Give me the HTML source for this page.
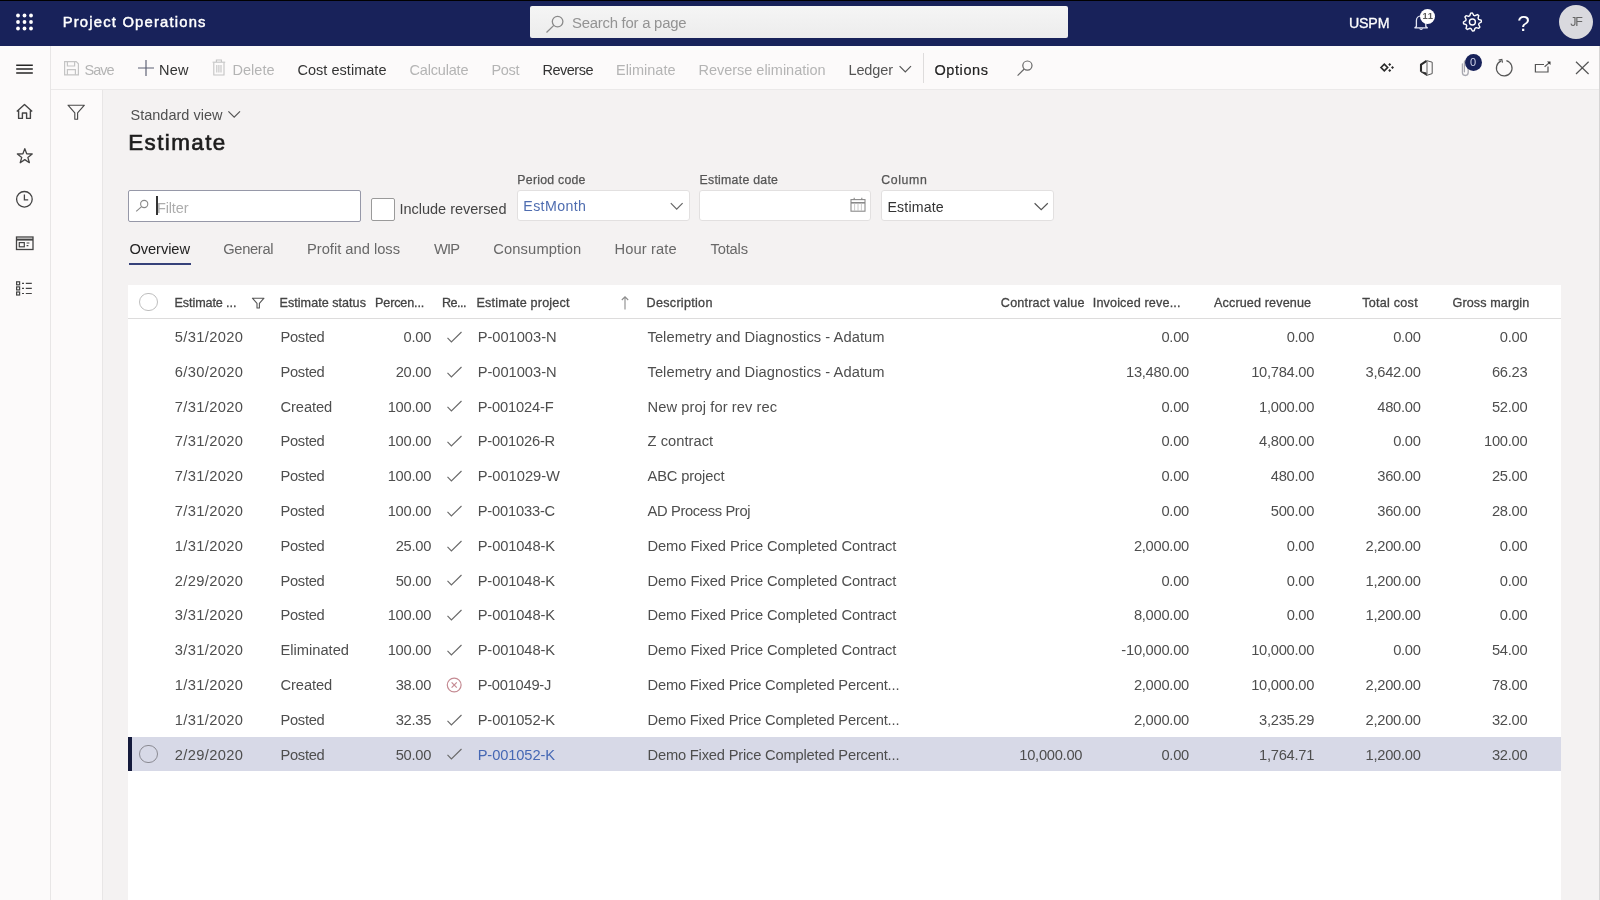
<!DOCTYPE html>
<html lang="en"><head><meta charset="utf-8"><title>Estimate - Project Operations</title>
<style>
html,body{margin:0;padding:0;}
body{width:1600px;height:900px;overflow:hidden;background:#f4f2f2;font-family:"Liberation Sans", sans-serif;position:relative;}
#app{position:absolute;left:0;top:0;width:1600px;height:900px;overflow:hidden;will-change:transform;}
.b{position:absolute;display:block;}
.t{position:absolute;white-space:pre;}
</style></head>
<body>
<div id="app">
<div class="b" style="left:0px;top:0px;width:1600px;height:46px;background:#18225a;"></div>
<div class="b" style="left:0px;top:0px;width:1600px;height:1px;background:#000;"></div>
<div class="b" style="left:0px;top:46px;width:1600px;height:44px;background:#fcfafa;"></div>
<div class="b" style="left:51px;top:89px;width:1549px;height:1px;background:#ebe9e9;"></div>
<div class="b" style="left:0px;top:46px;width:50px;height:854px;background:#fcfafa;"></div>
<div class="b" style="left:50px;top:46px;width:1px;height:854px;background:#e8e6e6;"></div>
<div class="b" style="left:51px;top:90px;width:51px;height:810px;background:#fcfafa;"></div>
<div class="b" style="left:102px;top:90px;width:1px;height:810px;background:#e8e6e6;"></div>
<div class="b" style="left:1599px;top:46px;width:1px;height:854px;background:#d6d5d5;"></div>
<svg class="b" style="left:0px;top:0px;" width="50" height="46" viewBox="0 0 50 46" fill="none"><g fill="#fff"><circle cx="18" cy="15.5" r="1.9"/><circle cx="24.5" cy="15.5" r="1.9"/><circle cx="31" cy="15.5" r="1.9"/><circle cx="18" cy="22" r="1.9"/><circle cx="24.5" cy="22" r="1.9"/><circle cx="31" cy="22" r="1.9"/><circle cx="18" cy="28.5" r="1.9"/><circle cx="24.5" cy="28.5" r="1.9"/><circle cx="31" cy="28.5" r="1.9"/></g></svg>
<div class="t" style="top:13.00px;font-size:14.8px;line-height:18px;color:#fff;letter-spacing:1.193px;-webkit-text-stroke:0.45px #fff;left:62.68px;">Project Operations</div>
<div class="b" style="left:530px;top:6px;width:538px;height:31.6px;background:linear-gradient(#f5f5f5,#ececec);border-radius:2px;"></div>
<svg class="b" style="left:540px;top:10px;" width="30" height="26" viewBox="0 0 30 26" fill="none"><circle cx="17.6" cy="11.6" r="5.3" stroke="#8a8a8a" stroke-width="1.3"/><path d="M13.8 15.4 L6.5 22.5" stroke="#8a8a8a" stroke-width="1.3"/></svg>
<div class="t" style="top:14.00px;font-size:14.9px;line-height:18px;color:#939393;letter-spacing:-0.240px;left:571.98px;">Search for a page</div>
<div class="t" style="top:15.00px;font-size:14.2px;line-height:17px;color:#fff;letter-spacing:-0.169px;-webkit-text-stroke:0.3px #fff;left:1349.00px;">USPM</div>
<svg class="b" style="left:1408px;top:10px;" width="30" height="26" viewBox="0 0 30 26" fill="none"><path d="M8.4 16.4 V10.6 a4.7 4.7 0 0 1 9.4 0 V16.4 l1.5 1.4 H6.9 Z" stroke="#e4e6f4" stroke-width="1.3" stroke-linejoin="round"/><path d="M11.6 18.4 a1.6 1.6 0 0 0 3 0" stroke="#e4e6f4" stroke-width="1.2"/></svg>
<div class="b" style="left:1420px;top:8.5px;width:15px;height:15.0px;background:#fff;border-radius:50%;"></div>
<div class="t" style="top:10.00px;font-size:9.4px;line-height:11px;color:#5a5a5a;font-weight:700;letter-spacing:0.536px;left:1422.47px;">11</div>
<svg class="b" style="left:1458px;top:8px;" width="30" height="30" viewBox="0 0 30 30" fill="none"><path d="M23.23 12.24 L23.40 14.00 L21.07 15.33 L20.68 16.60 L21.88 19.00 L20.76 20.36 L18.18 19.65 L17.00 20.28 L16.16 22.83 L14.40 23.00 L13.07 20.67 L11.80 20.28 L9.40 21.48 L8.04 20.36 L8.75 17.78 L8.12 16.60 L5.57 15.76 L5.40 14.00 L7.73 12.67 L8.12 11.40 L6.92 9.00 L8.04 7.64 L10.62 8.35 L11.80 7.72 L12.64 5.17 L14.40 5.00 L15.73 7.33 L17.00 7.72 L19.40 6.52 L20.76 7.64 L20.05 10.22 L20.68 11.40 Z" stroke="#fff" stroke-width="1.4" stroke-linejoin="round"/><circle cx="14.4" cy="14" r="3" stroke="#fff" stroke-width="1.4"/></svg>
<div class="t" style="top:10.00px;font-size:22.5px;line-height:27px;color:#fff;left:1517.21px;">?</div>
<div class="b" style="left:1558.5px;top:4.5px;width:34.0px;height:34.0px;background:#d9d9de;border-radius:50%;"></div>
<div class="t" style="top:15.00px;font-size:12.4px;line-height:15px;color:#666;letter-spacing:-1.000px;left:1570.17px;">JF</div>
<svg class="b" style="left:12px;top:56px;" width="26" height="26" viewBox="0 0 26 26" fill="none"><path d="M4.2 9.3 H20.8 M4.2 13.1 H20.8 M4.2 16.9 H20.8" stroke="#262626" stroke-width="1.5"/></svg>
<svg class="b" style="left:12px;top:100px;" width="26" height="24" viewBox="0 0 26 24" fill="none"><path d="M4.8 11.6 L12.5 4.6 L20.2 11.6 M6.6 10.4 V18.4 H10.4 V13 H14.6 V18.4 H18.4 V10.4" stroke="#444" stroke-width="1.4" stroke-linejoin="round"/></svg>
<svg class="b" style="left:12px;top:143px;" width="26" height="26" viewBox="0 0 26 26" fill="none"><path d="M12.80 5.60 L14.68 10.81 L20.22 10.99 L15.84 14.39 L17.38 19.71 L12.80 16.60 L8.22 19.71 L9.76 14.39 L5.38 10.99 L10.92 10.81 Z" stroke="#444" stroke-width="1.3" stroke-linejoin="round"/></svg>
<svg class="b" style="left:12px;top:187px;" width="26" height="26" viewBox="0 0 26 26" fill="none"><circle cx="12.4" cy="12.3" r="7.8" stroke="#444" stroke-width="1.3"/><path d="M12.4 7.6 V12.8 H16.2" stroke="#444" stroke-width="1.3"/></svg>
<svg class="b" style="left:12px;top:231px;" width="26" height="26" viewBox="0 0 26 26" fill="none"><rect x="4.5" y="6" width="16.5" height="12.5" stroke="#444" stroke-width="1.3"/><path d="M4.5 8.6 H21" stroke="#444" stroke-width="2"/><rect x="7.3" y="11.6" width="5" height="4.2" stroke="#444" stroke-width="1.2"/><path d="M14.6 12 H17.4 M14.6 14.6 H16.4" stroke="#444" stroke-width="1.2"/></svg>
<svg class="b" style="left:12px;top:276px;" width="26" height="26" viewBox="0 0 26 26" fill="none"><g stroke="#444" stroke-width="1.2"><rect x="4.6" y="5.8" width="3" height="3"/><rect x="4.6" y="10.9" width="3" height="3"/><rect x="4.6" y="16" width="3" height="3"/><path d="M10 7.3 H12 M13.8 7.3 H19.8 M10 12.4 H12 M13.8 12.4 H19.8 M10 17.5 H12 M13.8 17.5 H19.8"/></g></svg>
<svg class="b" style="left:63px;top:99px;" width="26" height="26" viewBox="0 0 26 26" fill="none"><path d="M5 6.2 H21.4 L14.6 13.8 V20.2 H11.8 V13.8 Z" stroke="#4a4a4a" stroke-width="1.15" stroke-linejoin="round"/></svg>
<svg class="b" style="left:62px;top:58px;" width="20" height="20" viewBox="0 0 20 20" fill="none"><g stroke="#c4c4c4" stroke-width="1.2"><path d="M2.6 3.6 H14.2 L16.4 5.8 V16.8 H2.6 Z"/><path d="M5.4 3.6 V8 H12.6 V3.6"/><path d="M5.4 16.8 V11.6 H13.4 V16.8"/></g></svg>
<div class="t" style="top:62.00px;font-size:14.5px;line-height:17px;color:#b4b4b4;letter-spacing:-1.000px;left:84.49px;">Save</div>
<svg class="b" style="left:136px;top:58px;" width="20" height="20" viewBox="0 0 20 20" fill="none"><path d="M10 2 V18 M2 10 H18" stroke="#5a5e72" stroke-width="1.15"/></svg>
<div class="t" style="top:62.00px;font-size:14.5px;line-height:17px;color:#333;letter-spacing:0.250px;left:158.99px;">New</div>
<svg class="b" style="left:209px;top:57px;" width="20" height="20" viewBox="0 0 20 20" fill="none"><g stroke="#c4c4c4" stroke-width="1.1"><path d="M3.6 5.2 H16.2"/><path d="M7.4 5 V3 H12.4 V5"/><path d="M4.8 5.4 V18 H15 V5.4"/><path d="M7.8 8 V15.6 M9.9 8 V15.6 M12 8 V15.6"/></g></svg>
<div class="t" style="top:62.00px;font-size:14.5px;line-height:17px;color:#b4b4b4;letter-spacing:0.019px;left:232.49px;">Delete</div>
<div class="t" style="top:62.00px;font-size:14.5px;line-height:17px;color:#333;letter-spacing:0.030px;left:297.49px;">Cost estimate</div>
<div class="t" style="top:62.00px;font-size:14.5px;line-height:17px;color:#b4b4b4;letter-spacing:-0.180px;left:409.49px;">Calculate</div>
<div class="t" style="top:62.00px;font-size:14.5px;line-height:17px;color:#b4b4b4;letter-spacing:-0.334px;left:491.49px;">Post</div>
<div class="t" style="top:62.00px;font-size:14.5px;line-height:17px;color:#333;letter-spacing:-0.497px;left:542.49px;">Reverse</div>
<div class="t" style="top:62.00px;font-size:14.5px;line-height:17px;color:#b4b4b4;letter-spacing:-0.016px;left:615.99px;">Eliminate</div>
<div class="t" style="top:62.00px;font-size:14.5px;line-height:17px;color:#b4b4b4;letter-spacing:-0.018px;left:698.49px;">Reverse elimination</div>
<div class="t" style="top:62.00px;font-size:14.5px;line-height:17px;color:#555;letter-spacing:-0.128px;left:848.49px;">Ledger</div>
<svg class="b" style="left:897px;top:62px;" width="16" height="14" viewBox="0 0 16 14" fill="none"><path d="M2.6 4.2 L8.3 10 L14 4.2" stroke="#555" stroke-width="1.2"/></svg>
<div class="b" style="left:922.5px;top:53px;width:1.0px;height:30px;background:#dedcdc;"></div>
<div class="t" style="top:62.00px;font-size:14.5px;line-height:17px;color:#222;letter-spacing:0.588px;-webkit-text-stroke:0.2px #222;left:934.49px;">Options</div>
<svg class="b" style="left:1012px;top:56px;" width="24" height="24" viewBox="0 0 24 24" fill="none"><circle cx="15.4" cy="9.6" r="4.6" stroke="#666" stroke-width="1.2"/><path d="M12.2 13 L5.6 19.6" stroke="#666" stroke-width="1.2"/></svg>
<svg class="b" style="left:1376px;top:58px;" width="24" height="20" viewBox="0 0 24 20" fill="none"><path d="M5.0 9.5 L8.3 6.2 L11.6 9.5 L8.3 12.8 Z" stroke="#2b2b2b" stroke-width="1.7"/><path d="M12.2 6.6 L13.7 5.1 L15.2 6.6 L13.7 8.1 Z M12.2 12.4 L13.7 10.9 L15.2 12.4 L13.7 13.9 Z M15 9.6 L16.5 8.1 L18 9.6 L16.5 11.1 Z" fill="#2b2b2b"/></svg>
<svg class="b" style="left:1414px;top:57px;" width="24" height="22" viewBox="0 0 24 22" fill="none"><path d="M7 14.6 V7.6 L12.6 3.8" stroke="#2b2b2b" stroke-width="2.1" stroke-linejoin="round"/><path d="M6.6 14.6 L12.6 18.4 V16 Z" fill="#2b2b2b" stroke="#2b2b2b" stroke-width="0.8" stroke-linejoin="round"/><path d="M12.6 3.6 L18.2 5.2 V16.6 L12.6 18.4" stroke="#555" stroke-width="1" stroke-linejoin="round"/><path d="M13 4.2 V17.6" stroke="#777" stroke-width="1.2"/></svg>
<svg class="b" style="left:1456px;top:56px;" width="24" height="24" viewBox="0 0 24 24" fill="none"><path d="M6.4 8 V16.6 a2.9 2.9 0 0 0 5.8 0 V6.4 a1.9 1.9 0 0 0 -3.8 0 V15.8" stroke="#a8a8b0" stroke-width="1.3" stroke-linecap="round"/></svg>
<div class="b" style="left:1465px;top:53.8px;width:17px;height:17.0px;background:#18225a;border-radius:50%;"></div>
<div class="t" style="top:56.00px;font-size:11px;line-height:13px;color:#cfd3ea;left:1470.12px;">0</div>
<svg class="b" style="left:1492px;top:56px;" width="24" height="24" viewBox="0 0 24 24" fill="none"><path d="M9.2 4.9 A7.8 7.8 0 1 0 14.4 4.6" stroke="#555" stroke-width="1.2"/><path d="M6.6 3.4 H9.8 V6.8" stroke="#555" stroke-width="1.2" fill="none" transform="rotate(-12 9.8 3.4)"/></svg>
<svg class="b" style="left:1531px;top:56px;" width="24" height="24" viewBox="0 0 24 24" fill="none"><path d="M13 8.5 H4.4 V16 H17 V10.6" stroke="#555" stroke-width="1.2"/><path d="M13.6 10.8 L18.4 6.6" stroke="#555" stroke-width="1.2"/><path d="M16 5.5 H19.5 V9 Z" fill="#333"/></svg>
<svg class="b" style="left:1570px;top:56px;" width="24" height="24" viewBox="0 0 24 24" fill="none"><path d="M6 5.8 L18.6 18 M18.6 5.8 L6 18" stroke="#555" stroke-width="1.2"/></svg>
<div class="t" style="top:107.00px;font-size:14.5px;line-height:17px;color:#505050;letter-spacing:0.010px;left:130.49px;">Standard view</div>
<svg class="b" style="left:226px;top:108px;" width="16" height="12" viewBox="0 0 16 12" fill="none"><path d="M2.4 3.4 L8.2 9.2 L14 3.4" stroke="#555" stroke-width="1.2"/></svg>
<div class="t" style="top:129.00px;font-size:22.4px;line-height:27px;color:#1c1c1c;letter-spacing:1.423px;-webkit-text-stroke:0.65px #1c1c1c;left:128.22px;">Estimate</div>
<div class="b" style="left:128px;top:190px;width:232.5px;height:31.5px;background:#fff;border:1px solid #9698a8;border-radius:2px;box-sizing:border-box;"></div>
<svg class="b" style="left:132px;top:196px;" width="20" height="20" viewBox="0 0 20 20" fill="none"><circle cx="12.2" cy="8" r="3.6" stroke="#888" stroke-width="1.1"/><path d="M9.6 10.6 L4.2 15.4" stroke="#888" stroke-width="1.1"/></svg>
<div class="b" style="left:156.2px;top:195.5px;width:1.4000000000000057px;height:19.5px;background:#333;"></div>
<div class="t" style="top:200.00px;font-size:14.5px;line-height:17px;color:#adadad;letter-spacing:-0.144px;left:156.99px;">Filter</div>
<div class="b" style="left:371px;top:197.5px;width:23.5px;height:23.5px;background:#fff;border:1px solid #9a9a9a;border-radius:2px;box-sizing:border-box;"></div>
<div class="t" style="top:201.00px;font-size:14.5px;line-height:17px;color:#444;letter-spacing:-0.013px;left:399.49px;">Include reversed</div>
<div class="t" style="top:173.00px;font-size:12.3px;line-height:15px;color:#555;letter-spacing:0.242px;-webkit-text-stroke:0.25px #555;left:517.37px;">Period code</div>
<div class="b" style="left:517px;top:189.6px;width:172.5px;height:31.900000000000006px;background:#fff;border:1px solid #e2e0e0;border-radius:3px;box-sizing:border-box;"></div>
<div class="t" style="top:198.00px;font-size:14.2px;line-height:17px;color:#4f6db0;letter-spacing:0.380px;left:523.30px;">EstMonth</div>
<svg class="b" style="left:668px;top:199px;" width="18" height="14" viewBox="0 0 18 14" fill="none"><path d="M2.8 4.2 L8.7 10.2 L14.6 4.2" stroke="#666" stroke-width="1.2"/></svg>
<div class="t" style="top:173.00px;font-size:12.3px;line-height:15px;color:#555;letter-spacing:0.264px;-webkit-text-stroke:0.25px #555;left:699.57px;">Estimate date</div>
<div class="b" style="left:699px;top:189.6px;width:171.60000000000002px;height:31.900000000000006px;background:#fff;border:1px solid #e2e0e0;border-radius:3px;box-sizing:border-box;"></div>
<svg class="b" style="left:848px;top:196px;" width="20" height="18" viewBox="0 0 20 18" fill="none"><g stroke="#8a8a8a" stroke-width="1.1"><rect x="3" y="3.6" width="14" height="11.6"/><path d="M3 6.8 H17" stroke-width="1.6"/><path d="M6.2 1.8 V4 M13.8 1.8 V4"/><path d="M6.6 7.6 V15 M10 7.6 V15 M13.4 7.6 V15" stroke="#c4c4c4" stroke-width="0.9"/></g></svg>
<div class="t" style="top:173.00px;font-size:12.3px;line-height:15px;color:#555;letter-spacing:0.597px;-webkit-text-stroke:0.25px #555;left:881.37px;">Column</div>
<div class="b" style="left:881.2px;top:189.6px;width:172.79999999999995px;height:31.900000000000006px;background:#fff;border:1px solid #e2e0e0;border-radius:3px;box-sizing:border-box;"></div>
<div class="t" style="top:199.00px;font-size:14.2px;line-height:17px;color:#333;letter-spacing:0.142px;left:887.50px;">Estimate</div>
<svg class="b" style="left:1032px;top:199px;" width="18" height="14" viewBox="0 0 18 14" fill="none"><path d="M2.6 4.2 L9.2 10.6 L15.8 4.2" stroke="#555" stroke-width="1.2"/></svg>
<div class="t" style="top:240.00px;font-size:14.7px;line-height:18px;color:#222;letter-spacing:-0.099px;left:129.49px;">Overview</div>
<div class="b" style="left:129px;top:262.6px;width:62px;height:2.3999999999999773px;background:#36427a;"></div>
<div class="t" style="top:240.00px;font-size:14.7px;line-height:18px;color:#686868;letter-spacing:-0.339px;left:223.29px;">General</div>
<div class="t" style="top:240.00px;font-size:14.7px;line-height:18px;color:#686868;left:306.99px;">Profit and loss</div>
<div class="t" style="top:240.00px;font-size:14.7px;line-height:18px;color:#686868;letter-spacing:-0.861px;left:433.99px;">WIP</div>
<div class="t" style="top:240.00px;font-size:14.7px;line-height:18px;color:#686868;letter-spacing:0.128px;left:493.29px;">Consumption</div>
<div class="t" style="top:240.00px;font-size:14.7px;line-height:18px;color:#686868;letter-spacing:0.124px;left:614.49px;">Hour rate</div>
<div class="t" style="top:240.00px;font-size:14.7px;line-height:18px;color:#686868;letter-spacing:-0.169px;left:710.49px;">Totals</div>
<div class="b" style="left:127.5px;top:285px;width:1433.1px;height:615px;background:#fff;"></div>
<div class="b" style="left:127.5px;top:318px;width:1433.1px;height:1px;background:#dddcdc;"></div>
<div class="b" style="left:127.5px;top:737.0999999999999px;width:1433.1px;height:33.80000000000007px;background:#d7d9e7;"></div>
<div class="b" style="left:128px;top:737.0999999999999px;width:3.5999999999999943px;height:33.80000000000007px;background:#141a3c;"></div>
<div class="b" style="left:139.2px;top:744.6999999999999px;width:18.600000000000023px;height:18.600000000000023px;border:1px solid #8a8a92;border-radius:50%;box-sizing:border-box;"></div>
<div class="b" style="left:139.2px;top:292.6px;width:18.600000000000023px;height:18.599999999999966px;border:1px solid #bdbdbd;border-radius:50%;box-sizing:border-box;background:#fff;"></div>
<div class="t" style="top:296.00px;font-size:12.6px;line-height:15px;color:#444;letter-spacing:-0.102px;-webkit-text-stroke:0.3px #444;left:174.56px;">Estimate ...</div>
<svg class="b" style="left:250px;top:295px;" width="16" height="16" viewBox="0 0 16 16" fill="none"><path d="M2.4 3.2 H14 L9.4 8.4 V13 H7 V8.4 Z" stroke="#555" stroke-width="1.1" stroke-linejoin="round"/></svg>
<div class="t" style="top:296.00px;font-size:12.6px;line-height:15px;color:#444;letter-spacing:0.021px;-webkit-text-stroke:0.3px #444;left:279.56px;">Estimate status</div>
<div class="t" style="top:296.00px;font-size:12.6px;line-height:15px;color:#444;letter-spacing:-0.153px;-webkit-text-stroke:0.3px #444;left:375.06px;">Percen...</div>
<div class="t" style="top:296.00px;font-size:12.6px;line-height:15px;color:#444;letter-spacing:-0.557px;-webkit-text-stroke:0.3px #444;left:442.06px;">Re...</div>
<div class="t" style="top:296.00px;font-size:12.6px;line-height:15px;color:#444;letter-spacing:0.172px;-webkit-text-stroke:0.3px #444;left:476.56px;">Estimate project</div>
<svg class="b" style="left:618px;top:294px;" width="14" height="18" viewBox="0 0 14 18" fill="none"><path d="M7 15.6 V3 M3.8 6 L7 2.8 L10.2 6" stroke="#8c8c8c" stroke-width="1.1"/></svg>
<div class="t" style="top:296.00px;font-size:12.6px;line-height:15px;color:#444;letter-spacing:0.288px;-webkit-text-stroke:0.3px #444;left:646.56px;">Description</div>
<div class="t" style="top:296.00px;font-size:12.6px;line-height:15px;color:#444;letter-spacing:0.183px;-webkit-text-stroke:0.3px #444;left:1000.86px;">Contract value</div>
<div class="t" style="top:296.00px;font-size:12.6px;line-height:15px;color:#444;letter-spacing:0.152px;-webkit-text-stroke:0.3px #444;left:1092.76px;">Invoiced reve...</div>
<div class="t" style="top:296.00px;font-size:12.6px;line-height:15px;color:#444;letter-spacing:0.126px;-webkit-text-stroke:0.3px #444;left:1214.06px;">Accrued revenue</div>
<div class="t" style="top:296.00px;font-size:12.6px;line-height:15px;color:#444;letter-spacing:0.253px;-webkit-text-stroke:0.3px #444;left:1362.16px;">Total cost</div>
<div class="t" style="top:296.00px;font-size:12.6px;line-height:15px;color:#444;letter-spacing:0.099px;-webkit-text-stroke:0.3px #444;left:1452.56px;">Gross margin</div>
<div class="t" style="top:328.00px;font-size:14.7px;line-height:18px;color:#4e4e4e;letter-spacing:0.336px;left:174.79px;">5/31/2020</div>
<div class="t" style="top:328.00px;font-size:14.7px;line-height:18px;color:#4e4e4e;letter-spacing:-0.301px;left:280.49px;">Posted</div>
<div class="t" style="top:328.00px;font-size:14.7px;line-height:18px;color:#4e4e4e;letter-spacing:-0.264px;right:1168.95px;text-align:right;">0.00</div>
<svg class="b" style="left:445px;top:328.7px;" width="18" height="16" viewBox="0 0 18 16" fill="none"><path d="M2.5 8.9 L6.4 12.9 L16.5 3" stroke="#6a6a6a" stroke-width="1.15"/></svg>
<div class="t" style="top:328.00px;font-size:14.7px;line-height:18px;color:#4e4e4e;letter-spacing:-0.030px;left:477.69px;">P-001003-N</div>
<div class="t" style="top:328.00px;font-size:14.7px;line-height:18px;color:#4e4e4e;letter-spacing:0.058px;left:647.49px;">Telemetry and Diagnostics - Adatum</div>
<div class="t" style="top:328.00px;font-size:14.7px;line-height:18px;color:#4e4e4e;letter-spacing:-0.264px;right:411.05px;text-align:right;">0.00</div>
<div class="t" style="top:328.00px;font-size:14.7px;line-height:18px;color:#4e4e4e;letter-spacing:-0.264px;right:285.85px;text-align:right;">0.00</div>
<div class="t" style="top:328.00px;font-size:14.7px;line-height:18px;color:#4e4e4e;letter-spacing:-0.264px;right:179.35px;text-align:right;">0.00</div>
<div class="t" style="top:328.00px;font-size:14.7px;line-height:18px;color:#4e4e4e;letter-spacing:-0.264px;right:72.65px;text-align:right;">0.00</div>
<div class="t" style="top:363.00px;font-size:14.7px;line-height:18px;color:#4e4e4e;letter-spacing:0.336px;left:174.79px;">6/30/2020</div>
<div class="t" style="top:363.00px;font-size:14.7px;line-height:18px;color:#4e4e4e;letter-spacing:-0.301px;left:280.49px;">Posted</div>
<div class="t" style="top:363.00px;font-size:14.7px;line-height:18px;color:#4e4e4e;letter-spacing:-0.264px;right:1168.95px;text-align:right;">20.00</div>
<svg class="b" style="left:445px;top:363.5px;" width="18" height="16" viewBox="0 0 18 16" fill="none"><path d="M2.5 8.9 L6.4 12.9 L16.5 3" stroke="#6a6a6a" stroke-width="1.15"/></svg>
<div class="t" style="top:363.00px;font-size:14.7px;line-height:18px;color:#4e4e4e;letter-spacing:-0.030px;left:477.69px;">P-001003-N</div>
<div class="t" style="top:363.00px;font-size:14.7px;line-height:18px;color:#4e4e4e;letter-spacing:0.058px;left:647.49px;">Telemetry and Diagnostics - Adatum</div>
<div class="t" style="top:363.00px;font-size:14.7px;line-height:18px;color:#4e4e4e;letter-spacing:-0.264px;right:411.05px;text-align:right;">13,480.00</div>
<div class="t" style="top:363.00px;font-size:14.7px;line-height:18px;color:#4e4e4e;letter-spacing:-0.264px;right:285.85px;text-align:right;">10,784.00</div>
<div class="t" style="top:363.00px;font-size:14.7px;line-height:18px;color:#4e4e4e;letter-spacing:-0.264px;right:179.35px;text-align:right;">3,642.00</div>
<div class="t" style="top:363.00px;font-size:14.7px;line-height:18px;color:#4e4e4e;letter-spacing:-0.264px;right:72.65px;text-align:right;">66.23</div>
<div class="t" style="top:398.00px;font-size:14.7px;line-height:18px;color:#4e4e4e;letter-spacing:0.336px;left:174.79px;">7/31/2020</div>
<div class="t" style="top:398.00px;font-size:14.7px;line-height:18px;color:#4e4e4e;letter-spacing:-0.089px;left:280.49px;">Created</div>
<div class="t" style="top:398.00px;font-size:14.7px;line-height:18px;color:#4e4e4e;letter-spacing:-0.264px;right:1168.95px;text-align:right;">100.00</div>
<svg class="b" style="left:445px;top:398.29999999999995px;" width="18" height="16" viewBox="0 0 18 16" fill="none"><path d="M2.5 8.9 L6.4 12.9 L16.5 3" stroke="#6a6a6a" stroke-width="1.15"/></svg>
<div class="t" style="top:398.00px;font-size:14.7px;line-height:18px;color:#4e4e4e;letter-spacing:-0.170px;left:477.69px;">P-001024-F</div>
<div class="t" style="top:398.00px;font-size:14.7px;line-height:18px;color:#4e4e4e;letter-spacing:0.078px;left:647.49px;">New proj for rev rec</div>
<div class="t" style="top:398.00px;font-size:14.7px;line-height:18px;color:#4e4e4e;letter-spacing:-0.264px;right:411.05px;text-align:right;">0.00</div>
<div class="t" style="top:398.00px;font-size:14.7px;line-height:18px;color:#4e4e4e;letter-spacing:-0.264px;right:285.85px;text-align:right;">1,000.00</div>
<div class="t" style="top:398.00px;font-size:14.7px;line-height:18px;color:#4e4e4e;letter-spacing:-0.264px;right:179.35px;text-align:right;">480.00</div>
<div class="t" style="top:398.00px;font-size:14.7px;line-height:18px;color:#4e4e4e;letter-spacing:-0.264px;right:72.65px;text-align:right;">52.00</div>
<div class="t" style="top:432.00px;font-size:14.7px;line-height:18px;color:#4e4e4e;letter-spacing:0.336px;left:174.79px;">7/31/2020</div>
<div class="t" style="top:432.00px;font-size:14.7px;line-height:18px;color:#4e4e4e;letter-spacing:-0.301px;left:280.49px;">Posted</div>
<div class="t" style="top:432.00px;font-size:14.7px;line-height:18px;color:#4e4e4e;letter-spacing:-0.264px;right:1168.95px;text-align:right;">100.00</div>
<svg class="b" style="left:445px;top:433.09999999999997px;" width="18" height="16" viewBox="0 0 18 16" fill="none"><path d="M2.5 8.9 L6.4 12.9 L16.5 3" stroke="#6a6a6a" stroke-width="1.15"/></svg>
<div class="t" style="top:432.00px;font-size:14.7px;line-height:18px;color:#4e4e4e;letter-spacing:-0.186px;left:477.69px;">P-001026-R</div>
<div class="t" style="top:432.00px;font-size:14.7px;line-height:18px;color:#4e4e4e;letter-spacing:0.046px;left:647.49px;">Z contract</div>
<div class="t" style="top:432.00px;font-size:14.7px;line-height:18px;color:#4e4e4e;letter-spacing:-0.264px;right:411.05px;text-align:right;">0.00</div>
<div class="t" style="top:432.00px;font-size:14.7px;line-height:18px;color:#4e4e4e;letter-spacing:-0.264px;right:285.85px;text-align:right;">4,800.00</div>
<div class="t" style="top:432.00px;font-size:14.7px;line-height:18px;color:#4e4e4e;letter-spacing:-0.264px;right:179.35px;text-align:right;">0.00</div>
<div class="t" style="top:432.00px;font-size:14.7px;line-height:18px;color:#4e4e4e;letter-spacing:-0.264px;right:72.65px;text-align:right;">100.00</div>
<div class="t" style="top:467.00px;font-size:14.7px;line-height:18px;color:#4e4e4e;letter-spacing:0.336px;left:174.79px;">7/31/2020</div>
<div class="t" style="top:467.00px;font-size:14.7px;line-height:18px;color:#4e4e4e;letter-spacing:-0.301px;left:280.49px;">Posted</div>
<div class="t" style="top:467.00px;font-size:14.7px;line-height:18px;color:#4e4e4e;letter-spacing:-0.264px;right:1168.95px;text-align:right;">100.00</div>
<svg class="b" style="left:445px;top:467.9px;" width="18" height="16" viewBox="0 0 18 16" fill="none"><path d="M2.5 8.9 L6.4 12.9 L16.5 3" stroke="#6a6a6a" stroke-width="1.15"/></svg>
<div class="t" style="top:467.00px;font-size:14.7px;line-height:18px;color:#4e4e4e;letter-spacing:-0.025px;left:477.69px;">P-001029-W</div>
<div class="t" style="top:467.00px;font-size:14.7px;line-height:18px;color:#4e4e4e;letter-spacing:-0.135px;left:647.49px;">ABC project</div>
<div class="t" style="top:467.00px;font-size:14.7px;line-height:18px;color:#4e4e4e;letter-spacing:-0.264px;right:411.05px;text-align:right;">0.00</div>
<div class="t" style="top:467.00px;font-size:14.7px;line-height:18px;color:#4e4e4e;letter-spacing:-0.264px;right:285.85px;text-align:right;">480.00</div>
<div class="t" style="top:467.00px;font-size:14.7px;line-height:18px;color:#4e4e4e;letter-spacing:-0.264px;right:179.35px;text-align:right;">360.00</div>
<div class="t" style="top:467.00px;font-size:14.7px;line-height:18px;color:#4e4e4e;letter-spacing:-0.264px;right:72.65px;text-align:right;">25.00</div>
<div class="t" style="top:502.00px;font-size:14.7px;line-height:18px;color:#4e4e4e;letter-spacing:0.336px;left:174.79px;">7/31/2020</div>
<div class="t" style="top:502.00px;font-size:14.7px;line-height:18px;color:#4e4e4e;letter-spacing:-0.301px;left:280.49px;">Posted</div>
<div class="t" style="top:502.00px;font-size:14.7px;line-height:18px;color:#4e4e4e;letter-spacing:-0.264px;right:1168.95px;text-align:right;">100.00</div>
<svg class="b" style="left:445px;top:502.7px;" width="18" height="16" viewBox="0 0 18 16" fill="none"><path d="M2.5 8.9 L6.4 12.9 L16.5 3" stroke="#6a6a6a" stroke-width="1.15"/></svg>
<div class="t" style="top:502.00px;font-size:14.7px;line-height:18px;color:#4e4e4e;letter-spacing:-0.186px;left:477.69px;">P-001033-C</div>
<div class="t" style="top:502.00px;font-size:14.7px;line-height:18px;color:#4e4e4e;letter-spacing:-0.337px;left:647.49px;">AD Process Proj</div>
<div class="t" style="top:502.00px;font-size:14.7px;line-height:18px;color:#4e4e4e;letter-spacing:-0.264px;right:411.05px;text-align:right;">0.00</div>
<div class="t" style="top:502.00px;font-size:14.7px;line-height:18px;color:#4e4e4e;letter-spacing:-0.264px;right:285.85px;text-align:right;">500.00</div>
<div class="t" style="top:502.00px;font-size:14.7px;line-height:18px;color:#4e4e4e;letter-spacing:-0.264px;right:179.35px;text-align:right;">360.00</div>
<div class="t" style="top:502.00px;font-size:14.7px;line-height:18px;color:#4e4e4e;letter-spacing:-0.264px;right:72.65px;text-align:right;">28.00</div>
<div class="t" style="top:537.00px;font-size:14.7px;line-height:18px;color:#4e4e4e;letter-spacing:0.336px;left:174.79px;">1/31/2020</div>
<div class="t" style="top:537.00px;font-size:14.7px;line-height:18px;color:#4e4e4e;letter-spacing:-0.301px;left:280.49px;">Posted</div>
<div class="t" style="top:537.00px;font-size:14.7px;line-height:18px;color:#4e4e4e;letter-spacing:-0.264px;right:1168.95px;text-align:right;">25.00</div>
<svg class="b" style="left:445px;top:537.5px;" width="18" height="16" viewBox="0 0 18 16" fill="none"><path d="M2.5 8.9 L6.4 12.9 L16.5 3" stroke="#6a6a6a" stroke-width="1.15"/></svg>
<div class="t" style="top:537.00px;font-size:14.7px;line-height:18px;color:#4e4e4e;letter-spacing:-0.118px;left:477.69px;">P-001048-K</div>
<div class="t" style="top:537.00px;font-size:14.7px;line-height:18px;color:#4e4e4e;letter-spacing:-0.073px;left:647.49px;">Demo Fixed Price Completed Contract</div>
<div class="t" style="top:537.00px;font-size:14.7px;line-height:18px;color:#4e4e4e;letter-spacing:-0.264px;right:411.05px;text-align:right;">2,000.00</div>
<div class="t" style="top:537.00px;font-size:14.7px;line-height:18px;color:#4e4e4e;letter-spacing:-0.264px;right:285.85px;text-align:right;">0.00</div>
<div class="t" style="top:537.00px;font-size:14.7px;line-height:18px;color:#4e4e4e;letter-spacing:-0.264px;right:179.35px;text-align:right;">2,200.00</div>
<div class="t" style="top:537.00px;font-size:14.7px;line-height:18px;color:#4e4e4e;letter-spacing:-0.264px;right:72.65px;text-align:right;">0.00</div>
<div class="t" style="top:572.00px;font-size:14.7px;line-height:18px;color:#4e4e4e;letter-spacing:0.336px;left:174.79px;">2/29/2020</div>
<div class="t" style="top:572.00px;font-size:14.7px;line-height:18px;color:#4e4e4e;letter-spacing:-0.301px;left:280.49px;">Posted</div>
<div class="t" style="top:572.00px;font-size:14.7px;line-height:18px;color:#4e4e4e;letter-spacing:-0.264px;right:1168.95px;text-align:right;">50.00</div>
<svg class="b" style="left:445px;top:572.3px;" width="18" height="16" viewBox="0 0 18 16" fill="none"><path d="M2.5 8.9 L6.4 12.9 L16.5 3" stroke="#6a6a6a" stroke-width="1.15"/></svg>
<div class="t" style="top:572.00px;font-size:14.7px;line-height:18px;color:#4e4e4e;letter-spacing:-0.118px;left:477.69px;">P-001048-K</div>
<div class="t" style="top:572.00px;font-size:14.7px;line-height:18px;color:#4e4e4e;letter-spacing:-0.073px;left:647.49px;">Demo Fixed Price Completed Contract</div>
<div class="t" style="top:572.00px;font-size:14.7px;line-height:18px;color:#4e4e4e;letter-spacing:-0.264px;right:411.05px;text-align:right;">0.00</div>
<div class="t" style="top:572.00px;font-size:14.7px;line-height:18px;color:#4e4e4e;letter-spacing:-0.264px;right:285.85px;text-align:right;">0.00</div>
<div class="t" style="top:572.00px;font-size:14.7px;line-height:18px;color:#4e4e4e;letter-spacing:-0.264px;right:179.35px;text-align:right;">1,200.00</div>
<div class="t" style="top:572.00px;font-size:14.7px;line-height:18px;color:#4e4e4e;letter-spacing:-0.264px;right:72.65px;text-align:right;">0.00</div>
<div class="t" style="top:606.00px;font-size:14.7px;line-height:18px;color:#4e4e4e;letter-spacing:0.336px;left:174.79px;">3/31/2020</div>
<div class="t" style="top:606.00px;font-size:14.7px;line-height:18px;color:#4e4e4e;letter-spacing:-0.301px;left:280.49px;">Posted</div>
<div class="t" style="top:606.00px;font-size:14.7px;line-height:18px;color:#4e4e4e;letter-spacing:-0.264px;right:1168.95px;text-align:right;">100.00</div>
<svg class="b" style="left:445px;top:607.0999999999999px;" width="18" height="16" viewBox="0 0 18 16" fill="none"><path d="M2.5 8.9 L6.4 12.9 L16.5 3" stroke="#6a6a6a" stroke-width="1.15"/></svg>
<div class="t" style="top:606.00px;font-size:14.7px;line-height:18px;color:#4e4e4e;letter-spacing:-0.118px;left:477.69px;">P-001048-K</div>
<div class="t" style="top:606.00px;font-size:14.7px;line-height:18px;color:#4e4e4e;letter-spacing:-0.073px;left:647.49px;">Demo Fixed Price Completed Contract</div>
<div class="t" style="top:606.00px;font-size:14.7px;line-height:18px;color:#4e4e4e;letter-spacing:-0.264px;right:411.05px;text-align:right;">8,000.00</div>
<div class="t" style="top:606.00px;font-size:14.7px;line-height:18px;color:#4e4e4e;letter-spacing:-0.264px;right:285.85px;text-align:right;">0.00</div>
<div class="t" style="top:606.00px;font-size:14.7px;line-height:18px;color:#4e4e4e;letter-spacing:-0.264px;right:179.35px;text-align:right;">1,200.00</div>
<div class="t" style="top:606.00px;font-size:14.7px;line-height:18px;color:#4e4e4e;letter-spacing:-0.264px;right:72.65px;text-align:right;">0.00</div>
<div class="t" style="top:641.00px;font-size:14.7px;line-height:18px;color:#4e4e4e;letter-spacing:0.336px;left:174.79px;">3/31/2020</div>
<div class="t" style="top:641.00px;font-size:14.7px;line-height:18px;color:#4e4e4e;letter-spacing:-0.005px;left:280.49px;">Eliminated</div>
<div class="t" style="top:641.00px;font-size:14.7px;line-height:18px;color:#4e4e4e;letter-spacing:-0.264px;right:1168.95px;text-align:right;">100.00</div>
<svg class="b" style="left:445px;top:641.9px;" width="18" height="16" viewBox="0 0 18 16" fill="none"><path d="M2.5 8.9 L6.4 12.9 L16.5 3" stroke="#6a6a6a" stroke-width="1.15"/></svg>
<div class="t" style="top:641.00px;font-size:14.7px;line-height:18px;color:#4e4e4e;letter-spacing:-0.118px;left:477.69px;">P-001048-K</div>
<div class="t" style="top:641.00px;font-size:14.7px;line-height:18px;color:#4e4e4e;letter-spacing:-0.073px;left:647.49px;">Demo Fixed Price Completed Contract</div>
<div class="t" style="top:641.00px;font-size:14.7px;line-height:18px;color:#4e4e4e;letter-spacing:-0.264px;right:411.05px;text-align:right;">-10,000.00</div>
<div class="t" style="top:641.00px;font-size:14.7px;line-height:18px;color:#4e4e4e;letter-spacing:-0.264px;right:285.85px;text-align:right;">10,000.00</div>
<div class="t" style="top:641.00px;font-size:14.7px;line-height:18px;color:#4e4e4e;letter-spacing:-0.264px;right:179.35px;text-align:right;">0.00</div>
<div class="t" style="top:641.00px;font-size:14.7px;line-height:18px;color:#4e4e4e;letter-spacing:-0.264px;right:72.65px;text-align:right;">54.00</div>
<div class="t" style="top:676.00px;font-size:14.7px;line-height:18px;color:#4e4e4e;letter-spacing:0.336px;left:174.79px;">1/31/2020</div>
<div class="t" style="top:676.00px;font-size:14.7px;line-height:18px;color:#4e4e4e;letter-spacing:-0.089px;left:280.49px;">Created</div>
<div class="t" style="top:676.00px;font-size:14.7px;line-height:18px;color:#4e4e4e;letter-spacing:-0.264px;right:1168.95px;text-align:right;">38.00</div>
<svg class="b" style="left:445px;top:675.7px;" width="18" height="18" viewBox="0 0 18 18" fill="none"><circle cx="9.2" cy="9" r="6.9" stroke="#c48a92" stroke-width="1.2"/><path d="M6.6 6.4 L11.8 11.6 M11.8 6.4 L6.6 11.6" stroke="#c48a92" stroke-width="1.2"/></svg>
<div class="t" style="top:676.00px;font-size:14.7px;line-height:18px;color:#4e4e4e;letter-spacing:-0.257px;left:477.69px;">P-001049-J</div>
<div class="t" style="top:676.00px;font-size:14.7px;line-height:18px;color:#4e4e4e;letter-spacing:-0.188px;left:647.49px;">Demo Fixed Price Completed Percent...</div>
<div class="t" style="top:676.00px;font-size:14.7px;line-height:18px;color:#4e4e4e;letter-spacing:-0.264px;right:411.05px;text-align:right;">2,000.00</div>
<div class="t" style="top:676.00px;font-size:14.7px;line-height:18px;color:#4e4e4e;letter-spacing:-0.264px;right:285.85px;text-align:right;">10,000.00</div>
<div class="t" style="top:676.00px;font-size:14.7px;line-height:18px;color:#4e4e4e;letter-spacing:-0.264px;right:179.35px;text-align:right;">2,200.00</div>
<div class="t" style="top:676.00px;font-size:14.7px;line-height:18px;color:#4e4e4e;letter-spacing:-0.264px;right:72.65px;text-align:right;">78.00</div>
<div class="t" style="top:711.00px;font-size:14.7px;line-height:18px;color:#4e4e4e;letter-spacing:0.336px;left:174.79px;">1/31/2020</div>
<div class="t" style="top:711.00px;font-size:14.7px;line-height:18px;color:#4e4e4e;letter-spacing:-0.301px;left:280.49px;">Posted</div>
<div class="t" style="top:711.00px;font-size:14.7px;line-height:18px;color:#4e4e4e;letter-spacing:-0.264px;right:1168.95px;text-align:right;">32.35</div>
<svg class="b" style="left:445px;top:711.5px;" width="18" height="16" viewBox="0 0 18 16" fill="none"><path d="M2.5 8.9 L6.4 12.9 L16.5 3" stroke="#6a6a6a" stroke-width="1.15"/></svg>
<div class="t" style="top:711.00px;font-size:14.7px;line-height:18px;color:#4e4e4e;letter-spacing:-0.118px;left:477.69px;">P-001052-K</div>
<div class="t" style="top:711.00px;font-size:14.7px;line-height:18px;color:#4e4e4e;letter-spacing:-0.188px;left:647.49px;">Demo Fixed Price Completed Percent...</div>
<div class="t" style="top:711.00px;font-size:14.7px;line-height:18px;color:#4e4e4e;letter-spacing:-0.264px;right:411.05px;text-align:right;">2,000.00</div>
<div class="t" style="top:711.00px;font-size:14.7px;line-height:18px;color:#4e4e4e;letter-spacing:-0.264px;right:285.85px;text-align:right;">3,235.29</div>
<div class="t" style="top:711.00px;font-size:14.7px;line-height:18px;color:#4e4e4e;letter-spacing:-0.264px;right:179.35px;text-align:right;">2,200.00</div>
<div class="t" style="top:711.00px;font-size:14.7px;line-height:18px;color:#4e4e4e;letter-spacing:-0.264px;right:72.65px;text-align:right;">32.00</div>
<div class="t" style="top:746.00px;font-size:14.7px;line-height:18px;color:#4e4e4e;letter-spacing:0.336px;left:174.79px;">2/29/2020</div>
<div class="t" style="top:746.00px;font-size:14.7px;line-height:18px;color:#4e4e4e;letter-spacing:-0.301px;left:280.49px;">Posted</div>
<div class="t" style="top:746.00px;font-size:14.7px;line-height:18px;color:#4e4e4e;letter-spacing:-0.264px;right:1168.95px;text-align:right;">50.00</div>
<svg class="b" style="left:445px;top:746.3px;" width="18" height="16" viewBox="0 0 18 16" fill="none"><path d="M2.5 8.9 L6.4 12.9 L16.5 3" stroke="#6a6a6a" stroke-width="1.15"/></svg>
<div class="t" style="top:746.00px;font-size:14.7px;line-height:18px;color:#4668b4;letter-spacing:-0.118px;left:477.69px;">P-001052-K</div>
<div class="t" style="top:746.00px;font-size:14.7px;line-height:18px;color:#4e4e4e;letter-spacing:-0.188px;left:647.49px;">Demo Fixed Price Completed Percent...</div>
<div class="t" style="top:746.00px;font-size:14.7px;line-height:18px;color:#4e4e4e;letter-spacing:-0.264px;right:517.75px;text-align:right;">10,000.00</div>
<div class="t" style="top:746.00px;font-size:14.7px;line-height:18px;color:#4e4e4e;letter-spacing:-0.264px;right:411.05px;text-align:right;">0.00</div>
<div class="t" style="top:746.00px;font-size:14.7px;line-height:18px;color:#4e4e4e;letter-spacing:-0.264px;right:285.85px;text-align:right;">1,764.71</div>
<div class="t" style="top:746.00px;font-size:14.7px;line-height:18px;color:#4e4e4e;letter-spacing:-0.264px;right:179.35px;text-align:right;">1,200.00</div>
<div class="t" style="top:746.00px;font-size:14.7px;line-height:18px;color:#4e4e4e;letter-spacing:-0.264px;right:72.65px;text-align:right;">32.00</div>
</div>
</body></html>
